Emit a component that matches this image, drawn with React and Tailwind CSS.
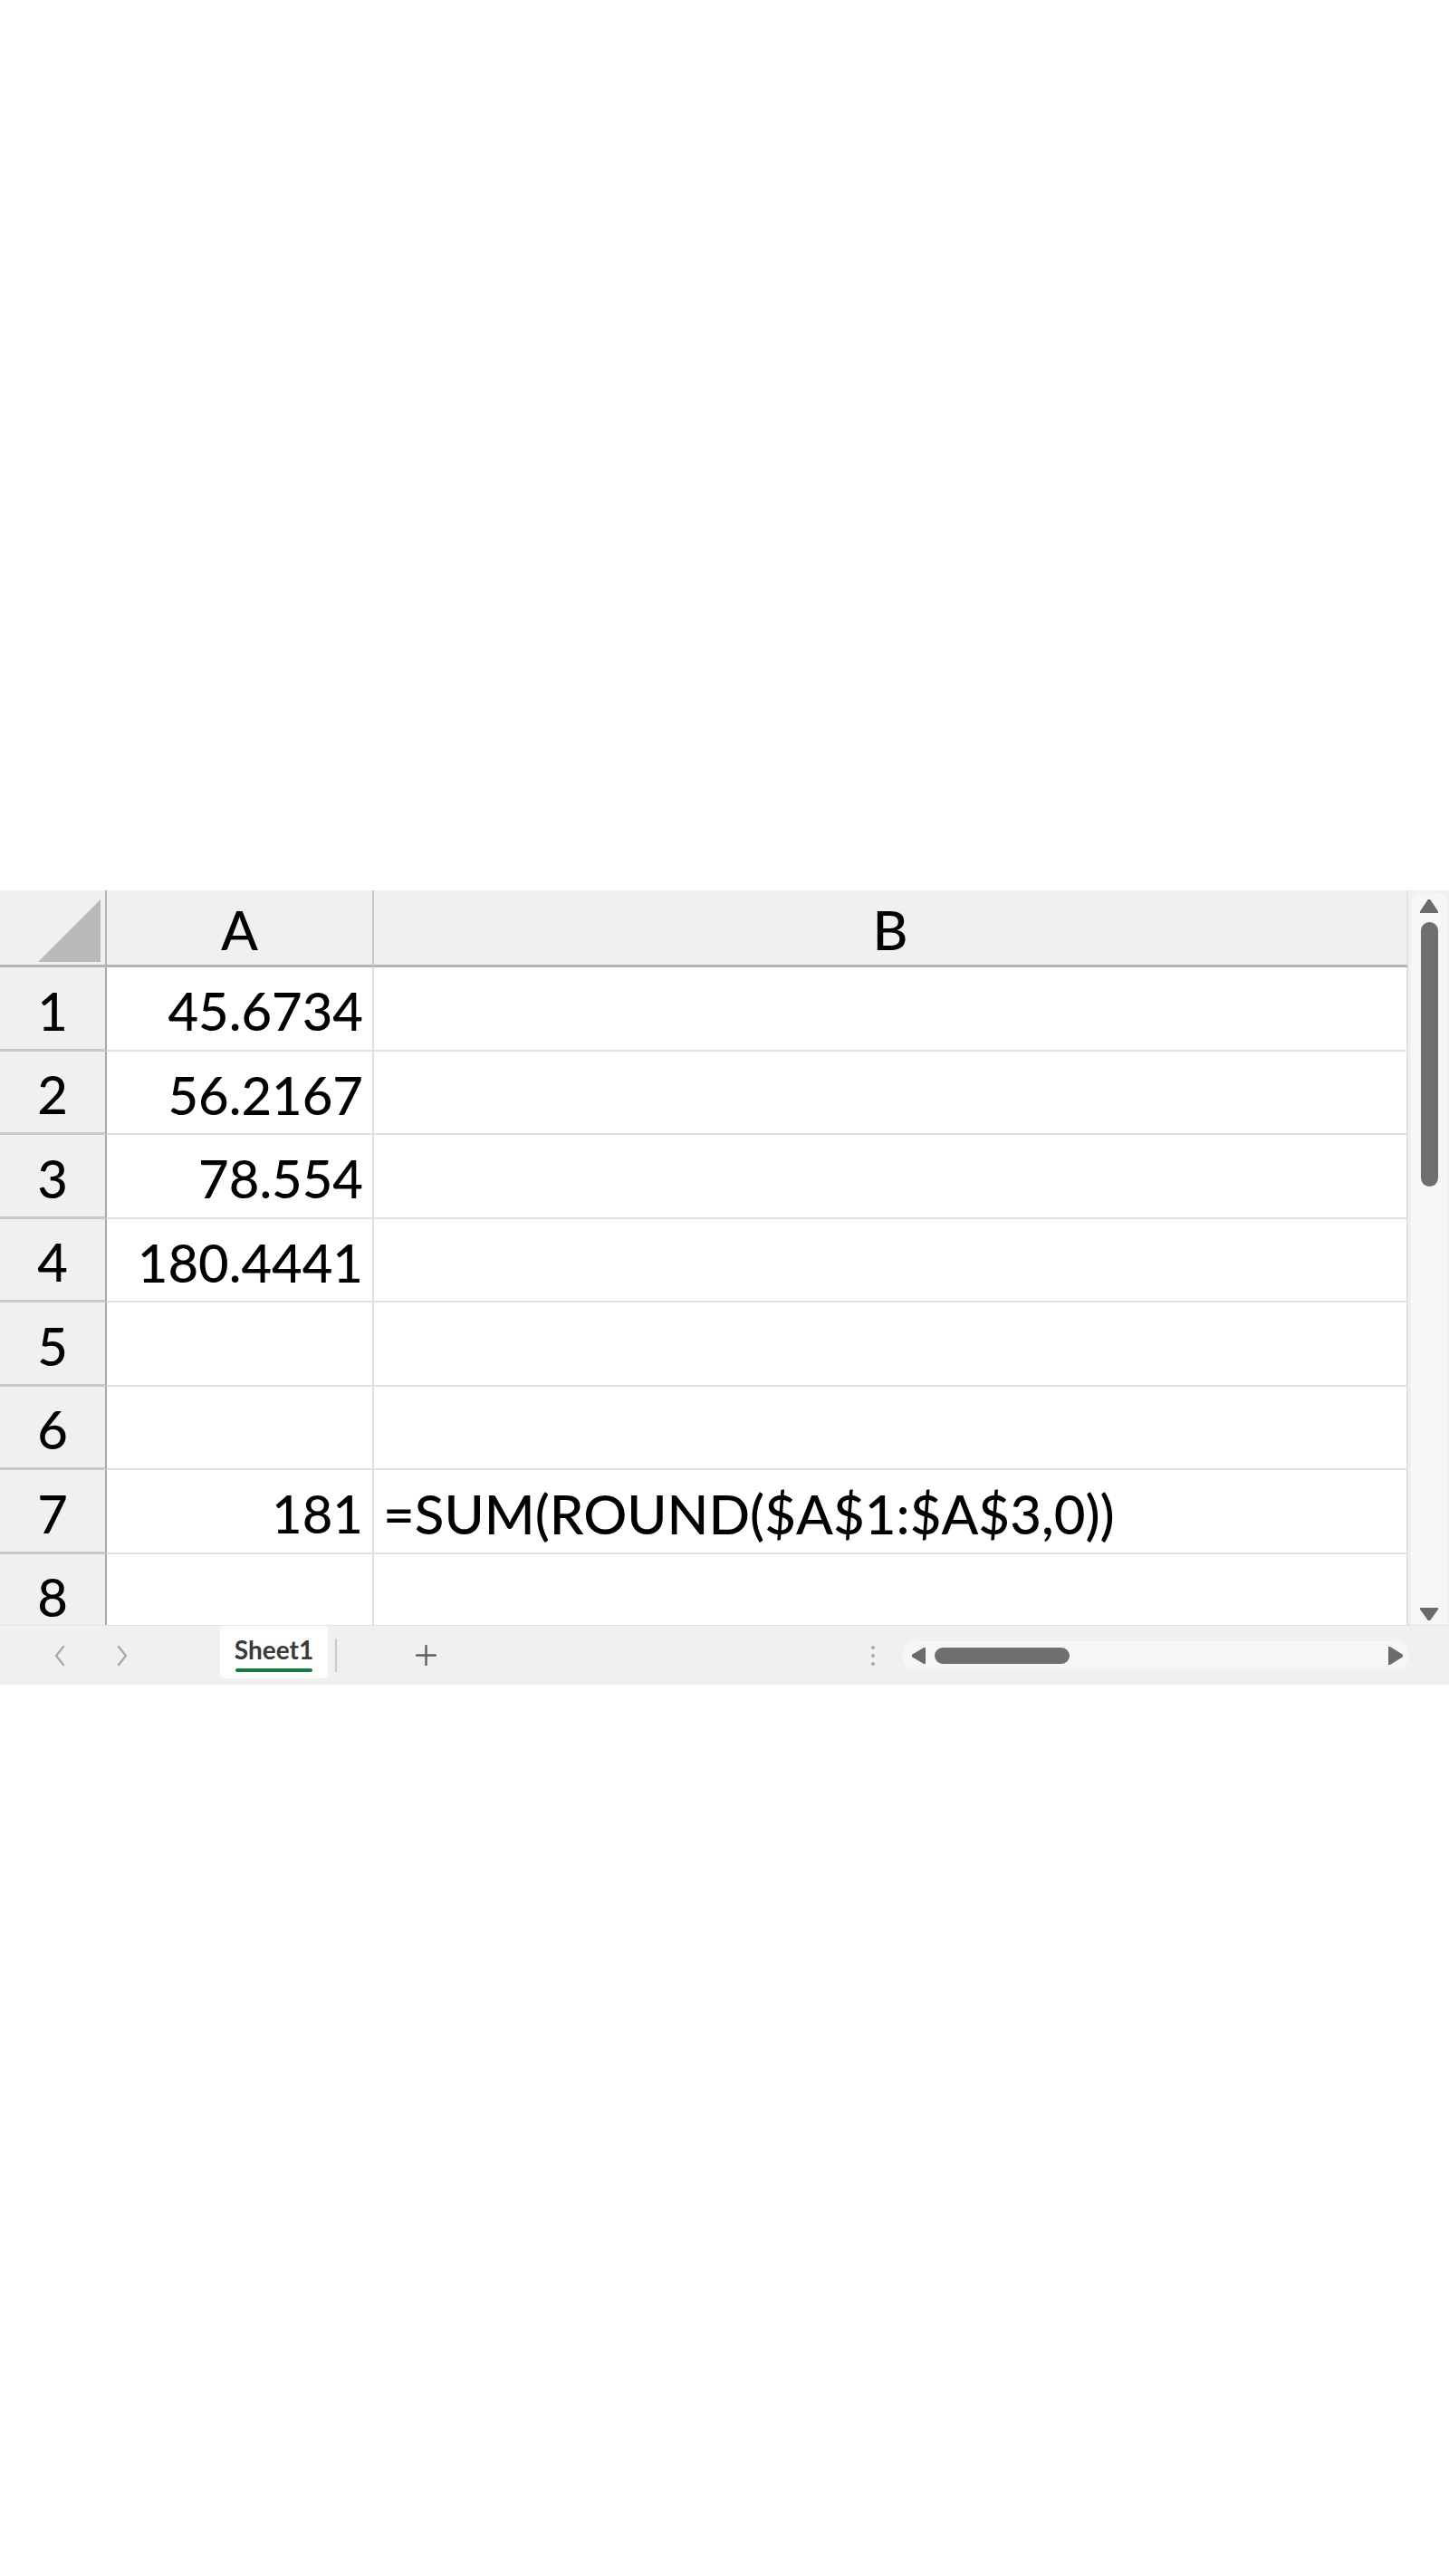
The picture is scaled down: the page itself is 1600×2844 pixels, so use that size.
import React from 'react';

// --- Data ---
const ROWS = [
  { n: 1, h: 'h-[93px]', a: '45.6734', b: '' },
  { n: 2, h: 'h-[92px]', a: '56.2167', b: '' },
  { n: 3, h: 'h-[93px]', a: '78.554', b: '' },
  { n: 4, h: 'h-[92px]', a: '180.4441', b: '' },
  { n: 5, h: 'h-[93px]', a: '', b: '' },
  { n: 6, h: 'h-[92px]', a: '', b: '' },
  { n: 7, h: 'h-[93px]', a: '181', b: '=SUM(ROUND($A$1:$A$3,0))' },
  { n: 8, h: 'h-[92px]', a: '', b: '' },
];

// --- Small drawings ---
function Chevron({ dir }) {
  const d = dir === 'left' ? 'M11 2 L3 12 L11 22' : 'M3 2 L11 12 L3 22';
  return (
    <svg width="14" height="24" viewBox="0 0 14 24" className="shrink-0">
      <path d={d} fill="none" stroke="#a9a9a9" strokeWidth="2.4" strokeLinecap="round" strokeLinejoin="round" />
    </svg>
  );
}

function Triangle({ dir, w, h }) {
  const pts = {
    up: `0,${h} ${w / 2},0 ${w},${h}`,
    down: `0,0 ${w},0 ${w / 2},${h}`,
    left: `${w},0 0,${h / 2} ${w},${h}`,
    right: `0,0 ${w},${h / 2} 0,${h}`,
  }[dir];
  return (
    <svg width={w} height={h} viewBox={`0 0 ${w} ${h}`} className="shrink-0">
      <polygon points={pts} fill="#6b6b6b" strokeLinejoin="round" stroke="#6b6b6b" strokeWidth="2" />
    </svg>
  );
}

// --- Grid row ---
function Row({ n, h, a, b }) {
  return (
    <div className={`flex shrink-0 ${h}`}>
      <div className="w-[118px] shrink-0 flex items-center justify-center pt-[5px] text-[58px] bg-[#f0f0f0] border-r-2 border-b-[3px] border-r-[#a9a9a9] border-b-[#c9c9c9]">
        {n}
      </div>
      <div className="w-[295px] shrink-0 flex items-center justify-end pr-[10px] pt-[5px] text-[58px] bg-white border-r-2 border-b-2 border-[#e1e1e1]">
        {a}
      </div>
      <div className="flex-1 flex items-center pl-[10px] pt-[5px] bg-white border-r-2 border-b-2 border-[#e1e1e1] whitespace-nowrap">
        {b}
      </div>
    </div>
  );
}

export default function App() {
  return (
    <div className="min-h-[2844px] bg-white pt-[983px]">
      <div className="w-[1600px] bg-[#f0f0f0]">
        {/* Sheet area */}
        <div className="flex h-[811px]">
          <div className="flex-1 flex flex-col overflow-hidden font-['Lato',sans-serif] font-medium text-[60px] leading-none text-black">
            {/* Column headers */}
            <div className="flex h-[85px] shrink-0 bg-[#f0f0f0]">
              <div className="w-[118px] shrink-0 flex items-end justify-end pr-[5px] pb-[3px] border-r-2 border-b-[3px] border-[#b4b4b4]">
                <svg width="69" height="69" viewBox="0 0 69 69">
                  <polygon points="0,69 69,0 69,69" fill="#b9b9b9" />
                </svg>
              </div>
              <div className="w-[295px] shrink-0 flex items-center justify-center pt-[4px] border-r-2 border-b-[3px] border-r-[#c9c9c9] border-b-[#b4b4b4]">
                A
              </div>
              <div className="flex-1 flex items-center justify-center pt-[4px] border-b-[3px] border-r-2 border-b-[#b4b4b4] border-r-[#e1e1e1]">
                B
              </div>
            </div>
            {ROWS.map(r => (
              <Row key={r.n} {...r} />
            ))}
          </div>

          {/* Vertical scrollbar */}
          <div className="w-[45px] shrink-0 flex flex-col pt-[2px] pr-[2px] pl-[3px]">
            <div className="flex-1 flex flex-col items-center rounded-t-[10px] bg-[#f6f6f6] pt-[8px] pb-[5px]">
              <Triangle dir="up" w={20} h={15} />
              <div className="mt-[10px] w-[19px] h-[292px] rounded-full bg-[#6f6f6f]" />
              <div className="flex-1" />
              <Triangle dir="down" w={20} h={14} />
            </div>
          </div>
        </div>

        {/* Sheet tab bar */}
        <div className="flex items-center h-[66px] border-t border-[#e3e3e3]">
          <div className="ml-[59px]">
            <Chevron dir="left" />
          </div>
          <div className="ml-[55px]">
            <Chevron dir="right" />
          </div>
          <div className="ml-[101px] self-start w-[119px] h-[58px] shrink-0 flex flex-col items-center rounded-b-md rounded-t-sm bg-white pt-[12px] font-['Lato',sans-serif] text-[28px] leading-none font-bold text-[#3a3a3a]">
            <span>Sheet1</span>
            <div className="mt-[7px] w-[85px] h-[4px] rounded-full bg-[#137c3f]" />
          </div>
          <div className="ml-[8px] w-[2px] h-[37px] bg-[#cacaca]" />
          <svg width="23" height="23" viewBox="0 0 23 23" className="ml-[87px] shrink-0">
            <path d="M11.5 1 V22 M1 11.5 H22" stroke="#5f5f5f" strokeWidth="2.4" strokeLinecap="round" />
          </svg>
          <div className="ml-[480px] flex flex-col gap-[5px]">
            <div className="w-[4px] h-[4px] rounded-full bg-[#a9a9a9]" />
            <div className="w-[4px] h-[4px] rounded-full bg-[#a9a9a9]" />
            <div className="w-[4px] h-[4px] rounded-full bg-[#a9a9a9]" />
          </div>
          {/* Horizontal scrollbar */}
          <div className="ml-[30px] w-[560px] h-[31px] flex items-center rounded-full bg-[#f6f6f6] pl-[11px] pr-[7px]">
            <Triangle dir="left" w={15} h={18} />
            <div className="ml-[10px] w-[149px] h-[18px] rounded-full bg-[#6f6f6f]" />
            <div className="flex-1" />
            <Triangle dir="right" w={16} h={20} />
          </div>
        </div>
      </div>
    </div>
  );
}
